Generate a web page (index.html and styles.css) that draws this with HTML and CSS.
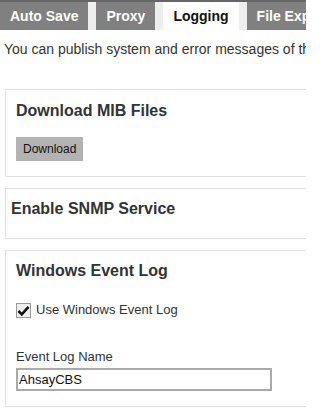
FILE: index.html
```html
<!DOCTYPE html>
<html lang="en">
<head>
    <meta charset="UTF-8">
    <meta name="viewport" content="width=device-width, initial-scale=1.0">
    <title>Logging Settings</title>
    <link rel="stylesheet" href="styles.css">
</head>
<body>
    <div class="page">
        <div class="tabs">
            <div class="tab">Auto Save</div>
            <div class="tab">Proxy</div>
            <div class="tab active">Logging</div>
            <div class="tab">File Explorer</div>
        </div>

        <p class="intro">You can publish system and error messages of the backup server to other logging services.</p>

        <div class="panel">
            <h2 class="panel-title">Download MIB Files</h2>
            <button class="btn">Download</button>
        </div>

        <div class="panel panel-narrow">
            <h2 class="panel-title">Enable SNMP Service</h2>
        </div>

        <div class="panel panel-last">
            <h2 class="panel-title">Windows Event Log</h2>
            <label class="check-row">
                <span class="checkbox">
                    <svg width="13" height="13" viewBox="0 0 13 13">
                        <path d="M1.5 7 L4.8 10.3 L11.5 2.8" fill="none" stroke="#111" stroke-width="2.6"/>
                    </svg>
                </span>
                Use Windows Event Log
            </label>
            <div class="field-label">Event Log Name</div>
            <input class="text-input" type="text" value="AhsayCBS">
        </div>
    </div>
</body>
</html>
```

FILE: styles.css
```css
* {
    margin: 0;
    padding: 0;
    box-sizing: border-box;
}

body {
    font-family: 'Liberation Sans', Arial, sans-serif;
    background-color: white;
    color: #333;
}

.page {
    width: 306px;
    overflow: hidden;
}

.tabs {
    display: flex;
    gap: 8px;
    height: 30px;
    border-top: 2px solid #666;
    background-color: #eee;
    white-space: nowrap;
}

.tab {
    flex-shrink: 0;
    padding: 0 10px;
    background-color: #808080;
    color: white;
    font-size: 14px;
    font-weight: bold;
    line-height: 28px;
}

.tab.active {
    background-color: white;
    color: #111;
}

.intro {
    margin-top: 11px;
    padding-left: 4px;
    font-size: 14px;
    line-height: 16px;
    white-space: nowrap;
}

.panel {
    width: 330px;
    margin: 32px 0 11px 5px;
    padding: 11px 10px 15px;
    border: 1px solid #e2e2e2;
}

.panel + .panel {
    margin-top: 0;
}

.panel-title {
    font-size: 16px;
    font-weight: bold;
    line-height: 20px;
    color: #333;
}

.btn {
    margin-top: 16px;
    height: 24px;
    padding: 0 7px;
    border: none;
    background-color: #b3b3b3;
    color: #111;
    font-family: inherit;
    font-size: 12px;
}

.panel-narrow {
    padding: 10px 5px 19px;
}

.panel-last {
    padding: 10px 10px 15px;
}

.check-row {
    display: flex;
    align-items: center;
    gap: 5px;
    margin-top: 21px;
    font-size: 13px;
    line-height: 16px;
}

.checkbox {
    display: flex;
    align-items: center;
    justify-content: center;
    width: 15px;
    height: 15px;
    border: 1px solid #999;
    background-color: #eee;
}

.field-label {
    margin-top: 31px;
    font-size: 13px;
    line-height: 15px;
}

.text-input {
    display: block;
    width: 256px;
    height: 23px;
    margin-top: 4px;
    padding: 0 1px;
    border: 2px solid #aaa;
    font-family: inherit;
    font-size: 13px;
    color: #111;
}
```
